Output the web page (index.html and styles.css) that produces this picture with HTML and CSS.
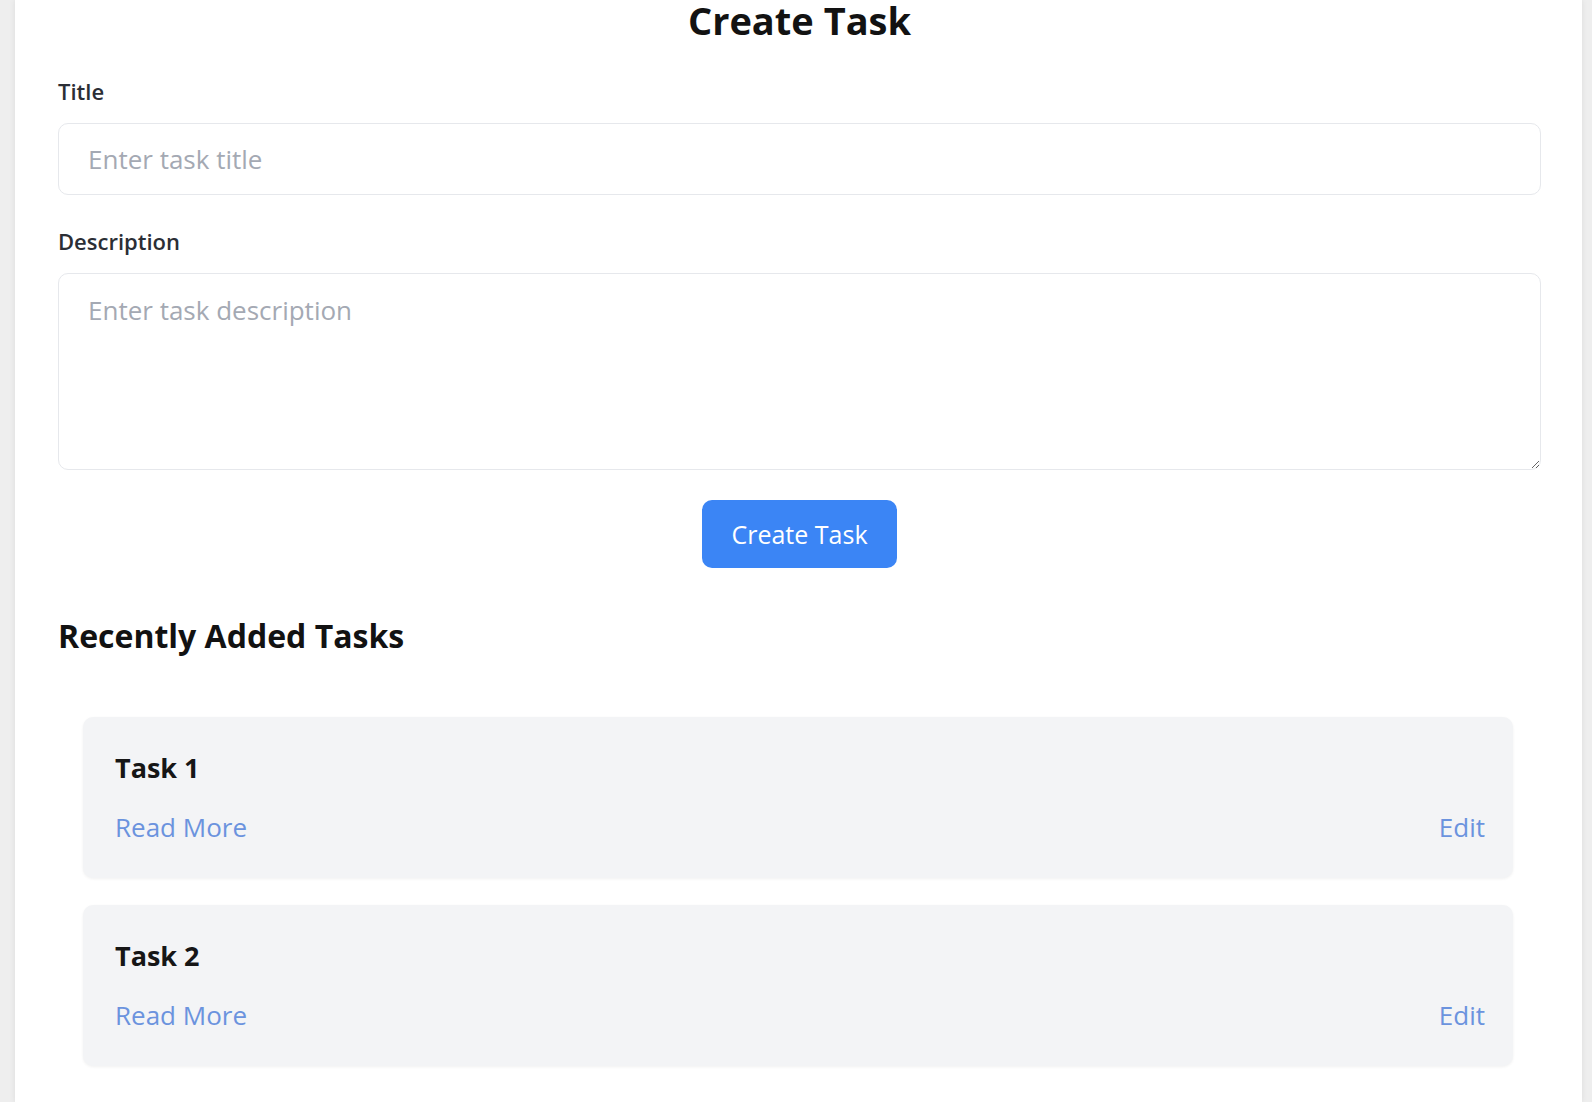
FILE: index.html
```html
<!DOCTYPE html>
<html lang="en">
<head>
<meta charset="utf-8">
<title>Create Task</title>
<link rel="stylesheet" href="styles.css">
</head>
<body>
  <main class="panel">
    <h1 class="page-title">Create Task</h1>
    <form class="task-form">
      <div class="field">
        <label class="field-label" for="title">Title</label>
        <input class="field-input" id="title" type="text" placeholder="Enter task title">
      </div>
      <div class="field">
        <label class="field-label" for="desc">Description</label>
        <textarea class="field-textarea" id="desc" placeholder="Enter task description"></textarea>
      </div>
      <div class="actions">
        <button class="btn-primary" type="button">Create Task</button>
      </div>
    </form>

    <h2 class="section-title">Recently Added Tasks</h2>
    <ul class="task-list">
      <li class="task-card">
        <h3 class="task-name">Task 1</h3>
        <div class="task-links">
          <a class="task-link" href="#">Read More</a>
          <a class="task-link" href="#">Edit</a>
        </div>
      </li>
      <li class="task-card">
        <h3 class="task-name">Task 2</h3>
        <div class="task-links">
          <a class="task-link" href="#">Read More</a>
          <a class="task-link" href="#">Edit</a>
        </div>
      </li>
    </ul>
  </main>
</body>
</html>
```
FILE: styles.css
```css
* { box-sizing: border-box; }

html, body {
  margin: 0;
  padding: 0;
  height: 100%;
  overflow: hidden;
}

body {
  background: #eeeeee;
  font-family: "Open Sans", "Noto Sans", sans-serif;
  color: #1a1a1a;
}

.panel {
  margin: 0 10px 0 15px;
  min-height: 100vh;
  background: #ffffff;
  padding: 1px 41px 20px 43px;
  box-shadow: 0 0 6px rgba(0, 0, 0, 0.08);
}

.page-title {
  margin: 0;
  font-size: 38px;
  line-height: 38px;
  font-weight: 700;
  text-align: center;
  color: #121212;
}

.task-form {
  margin-top: 36px;
}

.field {
  display: flex;
  flex-direction: column;
  margin-bottom: 30px;
}

.field-label {
  font-size: 22px;
  line-height: 32px;
  font-weight: 600;
  color: #2b2e35;
  margin-bottom: 16px;
}

.field-input,
.field-textarea {
  font-family: inherit;
  font-size: 26px;
  line-height: 38px;
  color: #1a1a1a;
  background: #ffffff;
  border: 1px solid #e6e8ec;
  border-radius: 10px;
  padding: 16px 29px;
  outline: none;
  width: 100%;
}

.field-input {
  height: 72px;
}

.field-textarea {
  height: 197px;
  resize: vertical;
  padding-top: 17px;
}

.field-input::placeholder,
.field-textarea::placeholder {
  color: #a4a9b3;
}

.actions {
  display: flex;
  justify-content: center;
}

.btn-primary {
  font-family: inherit;
  font-size: 25px;
  line-height: 38px;
  color: #ffffff;
  background: #3b85f5;
  border: none;
  border-radius: 10px;
  padding: 15px 0;
  width: 195px;
  white-space: nowrap;
  text-align: center;
  cursor: pointer;
}

.section-title {
  margin: 48px 0 0;
  font-size: 32px;
  line-height: 40px;
  font-weight: 700;
  color: #121212;
}

.task-list {
  list-style: none;
  margin: 61px 28px 0 25px;
  padding: 0;
  display: flex;
  flex-direction: column;
  gap: 27px;
}

.task-card {
  background: #f3f4f6;
  border-radius: 10px;
  padding: 32px 28px 32px 32px;
  box-shadow: 0 1px 3px rgba(0, 0, 0, 0.06);
}

.task-name {
  margin: 0;
  font-size: 27px;
  line-height: 38px;
  font-weight: 700;
  color: #161616;
}

.task-links {
  margin-top: 21px;
  display: flex;
  justify-content: space-between;
}

.task-link {
  font-size: 26px;
  line-height: 38px;
  color: #6b93de;
  text-decoration: none;
}
```
